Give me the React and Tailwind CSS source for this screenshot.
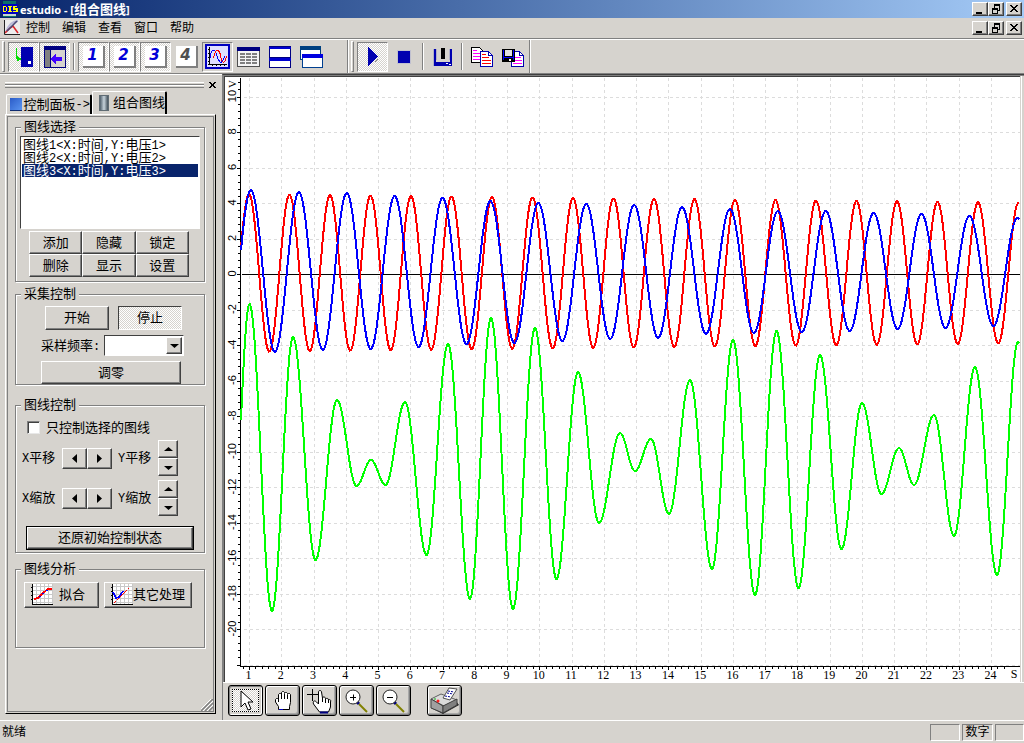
import React, { useState } from 'react';

const RAISED =
  'border border-t-white border-l-white border-r-[#404040] border-b-[#404040] shadow-[inset_-1px_-1px_0_#808080]';
const SUNKEN =
  'border border-t-[#808080] border-l-[#808080] border-r-white border-b-white';
const SUNKEN_DARK =
  'border border-t-[#404040] border-l-[#404040] border-r-white border-b-white';
const CHECKER =
  'bg-[repeating-conic-gradient(#ffffff_0_25%,#d6d3ce_0_50%)] bg-[length:2px_2px]';

// Latin characters take about half the width of a Chinese one
const HalfWidth = ({ children }) => (
  <>
    {children.split(/([\x20-\x7e]+)/).map((part, i) =>
      i % 2 ? (
        <span key={i} className="font-['Liberation_Mono',monospace] text-xs leading-none">{part}</span>
      ) : (
        part
      )
    )}
  </>
);

/* ---------- window buttons ---------- */

const WindowButtons = () => (
  <div className="flex pr-[2px]">
    <button aria-label="最小化" className={`w-4 h-[14px] bg-[#d6d3ce] ${RAISED}`}>
      <svg width="14" height="12" shapeRendering="crispEdges"><path d="M3 9h6v2H3z" /></svg>
    </button>
    <button aria-label="还原" className={`w-4 h-[14px] bg-[#d6d3ce] ${RAISED}`}>
      <svg width="14" height="12" shapeRendering="crispEdges" fill="none" stroke="#000">
        <path d="M5 1h6v2H5zM3 5h6v2H3z" fill="#000" stroke="none" />
        <path d="M5.5 2v3M10.500 2v5.500H9M3.500 6v4.500h5V6" />
      </svg>
    </button>
    <button aria-label="关闭" className={`ml-[2px] w-4 h-[14px] bg-[#d6d3ce] ${RAISED}`}>
      <svg width="14" height="12" shapeRendering="crispEdges">
        <path d="M3 2h2v1h1v1h2V3h1V2h2v1h-1v1H9v1H8v1h1v1h1v1h1v1H9V8H8V7H6v1H5v1H3V8h1V7h1V6h1V5H5V4H4V3H3z" />
      </svg>
    </button>
  </div>
);

const AppIcon = () => (
  <svg width="16" height="16" shapeRendering="crispEdges">
    <path d="M1 0h13v16H1z" fill="#0c6e6a" />
    <path d="M1 12h13v3H1z" fill="#c6d6ce" />
    <path d="M0 3h16v10H0z" fill="#0000c0" />
    <g fill="none" stroke="#ffff00">
      <path d="M1.5 5v6M1 5.5h3M1 10.5h3M4.5 6v4" strokeWidth="1.5" />
      <path d="M6 5.5h4M6 10.5h4M8 5v6" strokeWidth="1.5" />
      <path d="M15 5.5h-3v2.5h3v2.5h-4" strokeWidth="1.5" />
    </g>
  </svg>
);

const DocIcon = () => (
  <svg width="16" height="16">
    <path d="M0 0h16v15H0z" fill="#eee" />
    <path d="M2 12C5 4 9 1 14 1" fill="none" stroke="#b9b9d8" strokeWidth="2" />
    <path d="M1 13L6 8 9 6 14 13" fill="none" stroke="#d8282c" strokeWidth="1.6" />
    <path d="M3 11L13 1" fill="none" stroke="#4a4a78" strokeWidth="1.6" />
    <path d="M.5 0v14.5H16" fill="none" stroke="#222" />
  </svg>
);

/* ---------- toolbar ---------- */

const Grip = () => (
  <div className="w-[3px] h-[31px] ml-[2px] mr-[3px] border border-t-white border-l-white border-r-[#808080] border-b-[#808080]" />
);
const Separator = () => <div className="w-[2px] h-[27px] mx-[3px] bg-[#808080] border-r border-white" />;

const ToolButton = ({ label, pressed, plain, children }) => (
  <button
    aria-label={label}
    aria-pressed={!!pressed}
    className={`w-[31px] h-[30px] flex items-center justify-center ${
      pressed ? `${SUNKEN} ${plain ? '' : CHECKER}` : 'border border-transparent'
    }`}
  >
    {children}
  </button>
);

const NumberTile = ({ n, active }) => (
  <span
    className={`w-[22px] h-[22px] bg-white border-r-2 border-b-2 border-[#808080] flex items-center justify-center italic font-bold text-[15px] leading-none font-['DejaVu_Sans',sans-serif] ${
      active ? 'text-[#0000d8]' : 'text-[#505050]'
    }`}
  >
    {n}
  </span>
);

const DeviceIcon = () => (
  <svg width="20" height="20" shapeRendering="crispEdges">
    <path d="M7 0h12v20H7z" fill="#0000b0" />
    <path d="M14 14h3v3h-3z" fill="#fff" />
    <path d="M2.500 1v10.500H7" fill="none" stroke="#00e000" />
    <path d="M3 9h1v1h1v1h2v2H5v1H3z" fill="#00e000" />
  </svg>
);

const PanelIcon = () => (
  <svg width="22" height="22" shapeRendering="crispEdges">
    <path d="M0 0h22v22H0z" fill="#000080" />
    <path d="M1 4h5v17H1z" fill="#808080" />
    <path d="M7 4h14v17H7z" fill="#d6d3ce" />
    <path d="M7 12h1v-1h1v-1h1V9h1V8h1v3h6v4h-6v3h-1v-1h-1v-1H9v-1H8v-1H7z" fill="#4000ff" />
  </svg>
);

const GraphIcon = () => (
  <svg width="25" height="25" shapeRendering="crispEdges">
    <path d="M1 1h23v23H1z" fill="#e0e0ff" stroke="#0000c0" strokeWidth="2" />
    <path d="M4.500 3v18M3 20.500h19M3 5.500h1M3 9.500h1M3 13.500h1M3 17.500h1M7.500 21v1M11.500 21v1M15.500 21v1M19.500 21v1" stroke="#000" fill="none" />
    <path d="M5.500 14V9.500L7.500 6.500H9.500L11.500 9.500 12.500 14.500 15.500 18.500 17.500 17.500 19.500 12.500" fill="none" stroke="#0000ff" />
    <path d="M8.500 14L9.500 9.500 11.500 6.500H13.500L15.500 10.500 16.500 16.500 18.500 18.500 20.500 16.500 21.500 12.500" fill="none" stroke="#ff0000" />
  </svg>
);

const TableIcon = () => (
  <svg width="23" height="20" shapeRendering="crispEdges">
    <path d="M.5.5h22v19H.5z" fill="#f4f4f4" stroke="#505050" />
    <path d="M0 0h23v4H0z" fill="#000080" />
    <path d="M3 7h17M3 10h17M3 13h17M3 16h17" stroke="#808080" strokeWidth="2" strokeDasharray="5 1" />
  </svg>
);

const SplitIcon = () => (
  <svg width="22" height="22" shapeRendering="crispEdges">
    <path d="M.5.5h21v21H.5z" fill="#fff" stroke="#000080" />
    <path d="M0 0h22v3H0zM0 12h22v3H0z" fill="#0000d0" />
    <path d="M0 0h22v1H0zM0 11h22v1H0zM0 21h22v1H0z" fill="#000080" />
  </svg>
);

const CascadeIcon = () => (
  <svg width="24" height="22" shapeRendering="crispEdges">
    <path d="M1.500.5h20v13h-20z" fill="#fff" stroke="#003c80" />
    <path d="M1 0h21v4H1z" fill="#004080" />
    <path d="M3.500 8.500h20v13h-20z" fill="#fff" stroke="#004090" />
    <path d="M3 8h21v4H3z" fill="#0000e0" />
  </svg>
);

const PlayIcon = () => (
  <svg width="14" height="22" shapeRendering="crispEdges">
    <path d="M4 21l8-8 1-2-8 10z" fill="#808080" />
    <path d="M2 1l10 9.500L2 20z" fill="#0000b0" />
  </svg>
);

const MarkIcon = () => (
  <svg width="20" height="20" shapeRendering="crispEdges">
    <path d="M1 2h2v13h14V2h2v17H1z" fill="#0000b0" />
    <path d="M0 2h1v17H0zM3 2h1v11H3zM16 2h1v11h-1z" fill="#b0b0c8" />
    <path d="M8 1h4v11H8z" fill="#000" />
    <path d="M13 16h2M16 17h2" stroke="#fff" />
  </svg>
);

const CopyIcon = () => (
  <svg width="22" height="20" shapeRendering="crispEdges">
    <path d="M.5.5h8l3 3v12H.5z" fill="#fff" stroke="#000" />
    <path d="M2 3.500h4M2 6.500h7M2 9.500h7M2 12.500h7" stroke="#ff00ff" />
    <path d="M9.500 4.500h8l4 4v11h-12z" fill="#fff" stroke="#0000b0" />
    <path d="M17.500 4v4h4" fill="none" stroke="#0000b0" />
    <path d="M11 7.500h4M11 10.500h7M11 13.500h9M11 16.500h9" stroke="#ff0000" />
  </svg>
);

const SaveCopyIcon = () => (
  <svg width="22" height="20" shapeRendering="crispEdges">
    <path d="M9.500 4.500h8l4 4v11h-12z" fill="#fff" stroke="#0000b0" />
    <path d="M17.500 4v4h4" fill="none" stroke="#0000b0" />
    <path d="M11 10.500h8M11 13.500h9M11 16.500h9" stroke="#ff00ff" />
    <path d="M0 2h13v13H0z" fill="#000" />
    <path d="M1 3h1v10H1zM11 3h1v10h-1zM2 10h9v1H2z" fill="#0000ff" />
    <path d="M3 3h7v6H3z" fill="#e0e0e0" />
    <path d="M7 12h2v2H7z" fill="#fff" />
  </svg>
);

const Toolbar = () => (
  <div className="flex items-start h-[34px] border-t border-white">
    <div className="flex items-center h-[33px] pr-[21px] border-r border-[#808080]">
      <Grip />
      <ToolButton label="设备" pressed><DeviceIcon /></ToolButton>
      <ToolButton label="面板" pressed><PanelIcon /></ToolButton>
      <Separator />
      <ToolButton label="通道1" pressed><NumberTile n="1" active /></ToolButton>
      <ToolButton label="通道2" pressed><NumberTile n="2" active /></ToolButton>
      <ToolButton label="通道3" pressed><NumberTile n="3" active /></ToolButton>
      <ToolButton label="通道4"><NumberTile n="4" /></ToolButton>
      <ToolButton label="图线" pressed plain><GraphIcon /></ToolButton>
      <ToolButton label="表格"><TableIcon /></ToolButton>
      <ToolButton label="平铺"><SplitIcon /></ToolButton>
      <ToolButton label="层叠"><CascadeIcon /></ToolButton>
    </div>
    <div className="flex items-center h-[33px] pr-px border-l border-white border-r border-r-[#808080] shadow-[1px_0_0_#fff]">
      <Grip />
      <ToolButton label="开始采集" pressed><PlayIcon /></ToolButton>
      <ToolButton label="停止采集">
        <span className="w-3 h-3 bg-[#0000b0] outline outline-[#c0c0d0]" />
      </ToolButton>
      <Separator />
      <ToolButton label="标记"><MarkIcon /></ToolButton>
      <Separator />
      <ToolButton label="复制"><CopyIcon /></ToolButton>
      <ToolButton label="保存"><SaveCopyIcon /></ToolButton>
    </div>
  </div>
);

/* ---------- control panel ---------- */

const Group = ({ title, className, children }) => (
  <fieldset
    className={`ml-[7px] mr-2 border border-[#808080] shadow-[1px_1px_0_#fff,inset_1px_1px_0_#fff] ${className}`}
  >
    <legend className="ml-[5px] px-[3px] h-3 leading-3 bg-[#d6d3ce]">{title}</legend>
    {children}
  </fieldset>
);

const Button = ({ className = '', children, ...rest }) => (
  <button className={`flex items-center bg-[#d6d3ce] ${RAISED} ${className}`} {...rest}>
    {children}
  </button>
);

const ARROWS = {
  left: 'M7 0v9L2 4.500z',
  right: 'M2 0v9l5-4.500z',
  up: 'M0 6h9L4.500 2z',
  down: 'M0 3h9L4.500 7z',
};

const Arrow = ({ dir }) => (
  <svg width="9" height="9" className="shrink-0"><path d={ARROWS[dir]} /></svg>
);

const AxisRow = ({ action }) => (
  <div className="mt-1 h-9 flex items-center pl-[6px]">
    <span className="w-10"><HalfWidth>{`X${action}`}</HalfWidth></span>
    <Button className="w-[25px] h-[21px] justify-center" aria-label={`X${action}减`}><Arrow dir="left" /></Button>
    <Button className="w-[25px] h-[21px] justify-center" aria-label={`X${action}加`}><Arrow dir="right" /></Button>
    <span className="ml-[6px] w-10"><HalfWidth>{`Y${action}`}</HalfWidth></span>
    <span className="flex flex-col">
      <Button className="w-5 h-[18px] justify-center" aria-label={`Y${action}加`}><Arrow dir="up" /></Button>
      <Button className="w-5 h-[18px] justify-center" aria-label={`Y${action}减`}><Arrow dir="down" /></Button>
    </span>
  </div>
);

const MiniChart = ({ children }) => (
  <svg width="22" height="22" className="shrink-0" shapeRendering="crispEdges">
    <path d="M1 0h21v21H1z" fill="#fff" />
    <path d="M5.500 0v20M9.500 0v20M13.500 0v20M17.500 0v20M21.500 0v20M2 2.500h20M2 6.500h20M2 10.500h20M2 14.500h20M2 18.500h20" stroke="#c8c8c8" />
    <path d="M1.500 0v20.500H22M0 3.500h2M0 7.500h2M0 11.500h2M0 15.500h2" stroke="#000" fill="none" />
    {children}
  </svg>
);

const LINES = ['图线1<X:时间,Y:电压1>', '图线2<X:时间,Y:电压2>', '图线3<X:时间,Y:电压3>'];
const LINE_ACTIONS = ['添加', '隐藏', '锁定', '删除', '显示', '设置'];

const ControlPanel = () => {
  const [selected, setSelected] = useState(2);
  const [onlySelected, setOnlySelected] = useState(false);

  return (
    <aside className="w-[222px] shrink-0 flex flex-col border-t border-white pl-[5px] pr-[6px] pb-[6px] text-[13px]">
      <div className="flex items-center pt-1 h-4">
        <div className="w-[199px]">
          <div className="h-[3px] border-t border-white border-b border-b-[#808080]" />
          <div className="h-[3px] border-t border-white border-b border-b-[#808080]" />
        </div>
        <button aria-label="关闭面板" className="ml-[5px] -mr-1">
          <svg width="7" height="6" shapeRendering="crispEdges">
            <path d="M0 0h2v1h1v1h1V1h1V0h2v1H6v1H5v2h1v1h1v1H5V5H4V4H3v1H2v1H0V5h1V4h1V2H1V1H0z" />
          </svg>
        </button>
      </div>

      <div role="tablist" className="flex items-end h-[23px]">
        <button role="tab" className="ml-px w-[86px] h-5 flex items-center pl-[3px] rounded-t-[2px] border-l border-t border-white border-r-2 border-r-black whitespace-nowrap">
          <span className="w-4 h-[13px] mr-[2px] bg-linear-to-br from-[#2c5cc8] to-[#5a94f0] border-b border-[#102c70]" />
          <HalfWidth>{'控制面板->'}</HalfWidth>
        </button>
        <button role="tab" aria-selected="true" className="w-[75px] h-[23px] flex items-center pl-[6px] rounded-t-[2px] border-l border-t border-white border-r-2 border-r-black whitespace-nowrap">
          <span className="w-3 h-4 mr-1 bg-linear-to-r from-[#51606c] via-[#c8d4dc] to-[#45525c] border border-[#606c74]" />
          组合图线
        </button>
      </div>

      <div className="flex-1 flex flex-col border border-t-white border-l-white border-r-black border-b-black">
        <div className="flex-1 flex flex-col m-px border border-[#808080] pt-1">
          <Group title="图线选择" className="pb-1">
            <ul role="listbox" aria-label="图线选择" className={`mx-1 mt-[3px] h-[93px] bg-white p-px ${SUNKEN_DARK}`}>
              {LINES.map((line, i) => (
                <li
                  key={line}
                  role="option"
                  aria-selected={i === selected}
                  onClick={() => setSelected(i)}
                  className={`h-[13px] leading-[13px] pl-px whitespace-nowrap ${i === selected ? 'bg-[#08246b] text-white' : ''}`}
                >
                  <HalfWidth>{line}</HalfWidth>
                </li>
              ))}
            </ul>
            <div className="mt-[2px] ml-[13px] w-40 grid grid-cols-3">
              {LINE_ACTIONS.map((name) => (
                <Button key={name} className="h-[23px] justify-center">{name}</Button>
              ))}
            </div>
          </Group>

          <Group title="采集控制" className="mt-[6px]">
            <div className="mt-[6px] ml-[29px] flex gap-[9px]">
              <Button className="w-16 h-6 justify-center">开始</Button>
              <button className={`w-16 h-6 ${SUNKEN_DARK} ${CHECKER}`}>停止</button>
            </div>
            <div className="mt-[5px] flex items-center pl-[25px]">
              <label htmlFor="rate" className="w-[63px] whitespace-nowrap">采样频率<HalfWidth>:</HalfWidth></label>
              <div className="relative w-20 h-[21px]">
                <select id="rate" className={`appearance-none w-full h-full bg-white ${SUNKEN_DARK}`}>
                  <option></option>
                </select>
                <span className={`pointer-events-none absolute right-[2px] top-[2px] w-4 h-[17px] flex items-center justify-center bg-[#d6d3ce] ${RAISED}`}>
                  <Arrow dir="down" />
                </span>
              </div>
            </div>
            <Button className="mt-[5px] ml-[25px] w-[140px] h-[23px] justify-center">调零</Button>
          </Group>

          <Group title="图线控制" className="mt-[14px] pb-[2px]">
            <label className="mt-2 h-[17px] flex items-center pl-[11px]">
              <input
                type="checkbox"
                checked={onlySelected}
                onChange={(e) => setOnlySelected(e.target.checked)}
                className="appearance-none w-[13px] h-[13px] mr-[6px] bg-white checked:bg-[#404040] border border-t-[#808080] border-l-[#808080] border-r-[#e8e8e8] border-b-[#e8e8e8] shadow-[inset_1px_1px_0_#404040]"
              />
              只控制选择的图线
            </label>
            <AxisRow action="平移" />
            <AxisRow action="缩放" />
            <div className="mt-[10px] mx-[10px] border border-black">
              <Button className="w-full h-[22px] justify-center">还原初始控制状态</Button>
            </div>
          </Group>

          <Group title="图线分析" className="mt-[10px] pb-[39px]">
            <div className="mt-[7px] ml-2 flex gap-[5px]">
              <Button className="w-[75px] h-[26px] pl-[6px] gap-[6px]">
                <MiniChart>
                  <path d="M3 15l4-1 5-5 5-4h4" fill="none" stroke="#ff0000" strokeWidth="2" />
                  <path d="M8 12.500h2M11 9.500h2M15 6.500h2" stroke="#0000ff" />
                </MiniChart>
                拟合
              </Button>
              <Button className="w-[88px] h-[26px] pl-[6px] whitespace-nowrap">
                <MiniChart>
                  <path d="M3 19L18 4" fill="none" stroke="#ff0000" strokeDasharray="3 1" />
                  <path d="M2 8l3 6 3-1 4-6" fill="none" stroke="#0000ff" strokeWidth="1.500" />
                </MiniChart>
                其它处理
              </Button>
            </div>
          </Group>

          <svg width="12" height="12" className="mt-auto self-end">
            <path d="M0 12L12 0M4 12l8-8M8 12l4-4" stroke="#808080" strokeWidth="1.500" />
            <path d="M-2 12L12-2M2 12L12 2M6 12l6-6" stroke="#fff" />
          </svg>
        </div>
      </div>
    </aside>
  );
};

/* ---------- chart ---------- */

const xPos = (s) => 249.5 + (s - 1) * 32.26;
const yPos = (v) => 274.5 - v * 17.75;

// peaks and troughs of each line, joined by half cosines
const redTurns = Array.from({ length: 41 }, (_, i) => {
  const x = 228.75 + i * 20.25;
  const amp = 79 - i * 0.225;
  return [x, i % 2 ? 273 - amp : 273 + amp];
});

const BLUE_Y = [
  352, 190, 352, 192, 350, 193, 349, 196, 347, 198, 344, 201, 343, 203, 341, 204, 339, 205, 338,
  207, 334, 209, 333, 211, 332, 211, 331, 213, 329, 214, 328, 216, 326, 218, 325,
];
const blueTurns = BLUE_Y.map((y, i) => [227 + i * 23.95, y]);

const greenTurns = [
  [231, 570], [249.5, 304], [272, 611], [293, 337], [315.5, 560], [337, 400], [356.5, 486],
  [371, 460], [385.5, 485], [405, 402], [426.5, 555], [448, 344], [470, 599], [491, 318],
  [513, 609], [535, 328], [556.5, 579], [578, 372], [599, 523], [620, 433], [635, 471],
  [651, 439], [669, 514], [690, 380], [712, 569], [733, 340], [755, 595], [776.5, 331],
  [798.5, 588], [820, 355], [841.5, 549], [862, 403], [881.5, 494], [899, 448], [914, 485],
  [934, 415], [954, 536], [975, 367], [997, 575], [1018, 342], [1040, 560],
];

const wavePoints = (turns) => {
  const points = [];
  let k = 0;
  for (let x = 241; x <= 1019; x += 1) {
    while (turns[k + 1][0] < x) k += 1;
    const [x0, y0] = turns[k];
    const [x1, y1] = turns[k + 1];
    const f = (1 - Math.cos((Math.PI * (x - x0)) / (x1 - x0))) / 2;
    points.push(`${x},${(y0 + (y1 - y0) * f).toFixed(1)}`);
  }
  return points.join(' ');
};

const SECONDS = Array.from({ length: 24 }, (_, i) => i + 1);
const VOLTS = Array.from({ length: 17 }, (_, i) => 10 - i * 2);
const MINOR_X = Array.from({ length: 120 }, (_, i) => 0.8 + i * 0.2).filter((s) => s < 24.5);
const MINOR_Y = Array.from({ length: 83 }, (_, i) => 10.8 - i * 0.4).filter((v) => v >= -22);

const Chart = () => (
  <svg viewBox="225 77 795 605" className="block w-full h-auto bg-white">
    <g shapeRendering="crispEdges" fill="none">
      <g stroke="#dcdcdc" strokeDasharray="3 3">
        {SECONDS.map((s) => (
          <path key={s} d={`M${Math.floor(xPos(s)) + 0.5} 78V666`} />
        ))}
        {VOLTS.map((v) => (
          <path key={v} d={`M244 ${Math.floor(yPos(v)) + 0.5}H1020`} />
        ))}
      </g>
      <path d="M242 274.500H1020" stroke="#000" />
      <path d="M240.500 78V667M240 666.500H1020" stroke="#000" />
      <g stroke="#000">
        {MINOR_X.map((s) => (
          <path key={s} d={`M${Math.floor(xPos(s)) + 0.5} 667v2`} />
        ))}
        {SECONDS.map((s) => (
          <path key={s} d={`M${Math.floor(xPos(s)) + 0.5} 667v3`} />
        ))}
        {MINOR_Y.map((v) => (
          <path key={v} d={`M238 ${Math.floor(yPos(v)) + 0.5}h2`} />
        ))}
        {VOLTS.map((v) => (
          <path key={v} d={`M237 ${Math.floor(yPos(v)) + 0.5}h3`} />
        ))}
      </g>
      <g strokeWidth="2">
        <polyline points={wavePoints(redTurns)} stroke="#ff0000" />
        <polyline points={wavePoints(blueTurns)} stroke="#0000ff" />
        <polyline points={wavePoints(greenTurns)} stroke="#00ff00" />
      </g>
    </g>
    <g textAnchor="middle" className="text-xs font-['Liberation_Serif',serif]">
      {SECONDS.map((s) => (
        <text key={s} x={xPos(s) - 1} y="679">{s}</text>
      ))}
      <text x="1014" y="678">S</text>
    </g>
    <g textAnchor="middle" className="text-[11px] font-['Liberation_Sans',sans-serif]">
      {VOLTS.slice(0, 16).map((v) => (
        <text key={v} transform={`translate(236 ${yPos(v) - 1}) rotate(-90)`}>{v}</text>
      ))}
      <text transform="translate(236 84) rotate(-90)" className="font-['Liberation_Serif',serif]">V</text>
    </g>
  </svg>
);

/* ---------- bottom tools ---------- */

const ViewButton = ({ label, pressed, className = '', children }) => (
  <button
    aria-label={label}
    className={`w-[35px] h-[31px] p-[3px] rounded-[3px] border border-black flex items-center justify-center ${
      pressed
        ? 'shadow-[inset_1px_1px_0_#808080,inset_-1px_-1px_0_#fff]'
        : 'shadow-[inset_1px_1px_0_#fff,inset_-1px_-1px_0_#808080,inset_-2px_-2px_0_#a8a8a8]'
    } ${className}`}
  >
    {pressed ? (
      <span className={`w-full h-full flex items-center justify-center border border-dotted border-black ${CHECKER}`}>
        {children}
      </span>
    ) : (
      children
    )}
  </button>
);

const Lens = ({ plus }) => (
  <svg width="24" height="24" className="shrink-0">
    <path d="M12 13l2 2" stroke="#000080" strokeWidth="3" />
    <path d="M14 15l8 8" stroke="#808000" strokeWidth="2" />
    <circle cx="8" cy="8" r="7" fill="#fff" stroke="#222" />
    <path d={plus ? 'M5 8.500h6M8.500 5.500v6' : 'M5 8.500h6'} stroke="#000" fill="none" />
  </svg>
);

const ViewTools = () => (
  <div className="flex-1 flex items-start gap-[2px] pt-[2px] pl-[5px] border-t border-white">
    <ViewButton label="选择" pressed>
      <svg width="14" height="21">
        <path d="M2 1v16l4-4 3 7 3-1-3-7h5z" fill="#fff" stroke="#000" />
      </svg>
    </ViewButton>
    <ViewButton label="移动">
      <svg width="18" height="20">
        <path d="M4.500 18.500v-3L1.500 11V8.500l1-1h1l1 1V3.500l1-1h1l1 1v-2l1-1h1l1 1v1l1-1h1l1 1v1l1-1h1l1 1v8l-1 4v3z" fill="#fff" stroke="#000" />
        <path d="M7.500 3v5M10.500 3v5M13.500 4v4M4.500 8v3" stroke="#000" />
        <path d="M5 18.500h4" stroke="#0000c0" />
      </svg>
    </ViewButton>
    <ViewButton label="取点">
      <svg width="27" height="26" className="shrink-0">
        <path d="M1 6.500h12M6.500 1v12" stroke="#000" />
        <path d="M12.500 4c0-2 3-2 3 0l1 6c1-2 3-1 3 1 1-1 3-1 3 1 1-1 3 0 2 2v5l-2 5H13.500l-6-8c-1-3 1-4 3-2l2 2z" fill="#fff" stroke="#000" />
        <path d="M16.500 10v4M19.500 11v4M22.500 12v3" stroke="#000" />
        <path d="M14 24.500h8" stroke="#000080" strokeWidth="2" />
      </svg>
    </ViewButton>
    <ViewButton label="放大"><Lens plus /></ViewButton>
    <ViewButton label="缩小"><Lens /></ViewButton>
    <ViewButton label="打印" className="ml-[14px]">
      <svg width="31" height="27" className="shrink-0">
        <path d="M2 21l12 6 16-9-3-4z" fill="#202020" />
        <path d="M2 12l10-5 16 6-13 6z" fill="#dcdcdc" stroke="#606060" />
        <path d="M2 12v9l12 5v-7z" fill="#a0a0a0" stroke="#404040" />
        <path d="M14 19v7l14-8v-6z" fill="#808080" stroke="#404040" />
        <path d="M14 11l6-10 8 1-7 11z" fill="#fff" stroke="#505050" />
        <path d="M19 4l6 1M18 6l6 1M16 9l6 1" stroke="#000090" strokeDasharray="2 1" />
        <circle cx="9" cy="14" r="1.500" fill="#ff2020" />
        <circle cx="6" cy="12" r="1" fill="#50c050" />
      </svg>
    </ViewButton>
  </div>
);

const MENUS = ['控制', '编辑', '查看', '窗口', '帮助'];

const App = () => (
  <div className="min-h-screen flex flex-col bg-[#d6d3ce] text-black text-xs cursor-default font-['Liberation_Sans','Noto_Sans_CJK_SC',sans-serif]">
    <header className="h-[18px] flex items-center pl-[2px] bg-linear-to-r from-[#08246b] to-[#a5cbf7] text-white">
      <AppIcon />
      <h1 className="ml-[2px] flex-1 font-bold text-[13px] leading-4 whitespace-nowrap font-['Noto_Sans','Noto_Sans_CJK_SC',sans-serif]">
        <span className="text-[11px] leading-none">estudio - [</span>组合图线<span className="text-[11px] leading-none">]</span>
      </h1>
      <WindowButtons />
    </header>

    <nav className="h-[21px] flex items-center pl-1 border-b border-[#808080]">
      <DocIcon />
      <div className="flex-1 flex">
        {MENUS.map((name) => (
          <button key={name} className="px-[6px]">{name}</button>
        ))}
      </div>
      <WindowButtons />
    </nav>

    <Toolbar />

    <main className="flex-1 flex border-t border-[#808080]">
      <ControlPanel />
      <section className="flex-1 min-w-0 flex flex-col border-l border-[#808080] border-t border-t-[#404040]">
        <div className="border-t border-l border-[#808080] pr-1">
          <div className="border-t border-l border-[#404040] shadow-[1px_0_0_#d6d3ce,2px_0_0_#fff]">
            <Chart />
          </div>
        </div>
        <ViewTools />
      </section>
    </main>

    <footer className="h-[23px] flex items-center pl-[2px] border-t border-white">
      <span className="flex-1">就绪</span>
      <div className="flex gap-[2px] h-[17px] leading-[15px]">
        <span className={`w-[30px] ${SUNKEN}`} />
        <span className={`w-[31px] text-center whitespace-nowrap ${SUNKEN}`}>数字</span>
        <span className={`w-[29px] ${SUNKEN}`} />
      </div>
    </footer>
  </div>
);

export default App;
